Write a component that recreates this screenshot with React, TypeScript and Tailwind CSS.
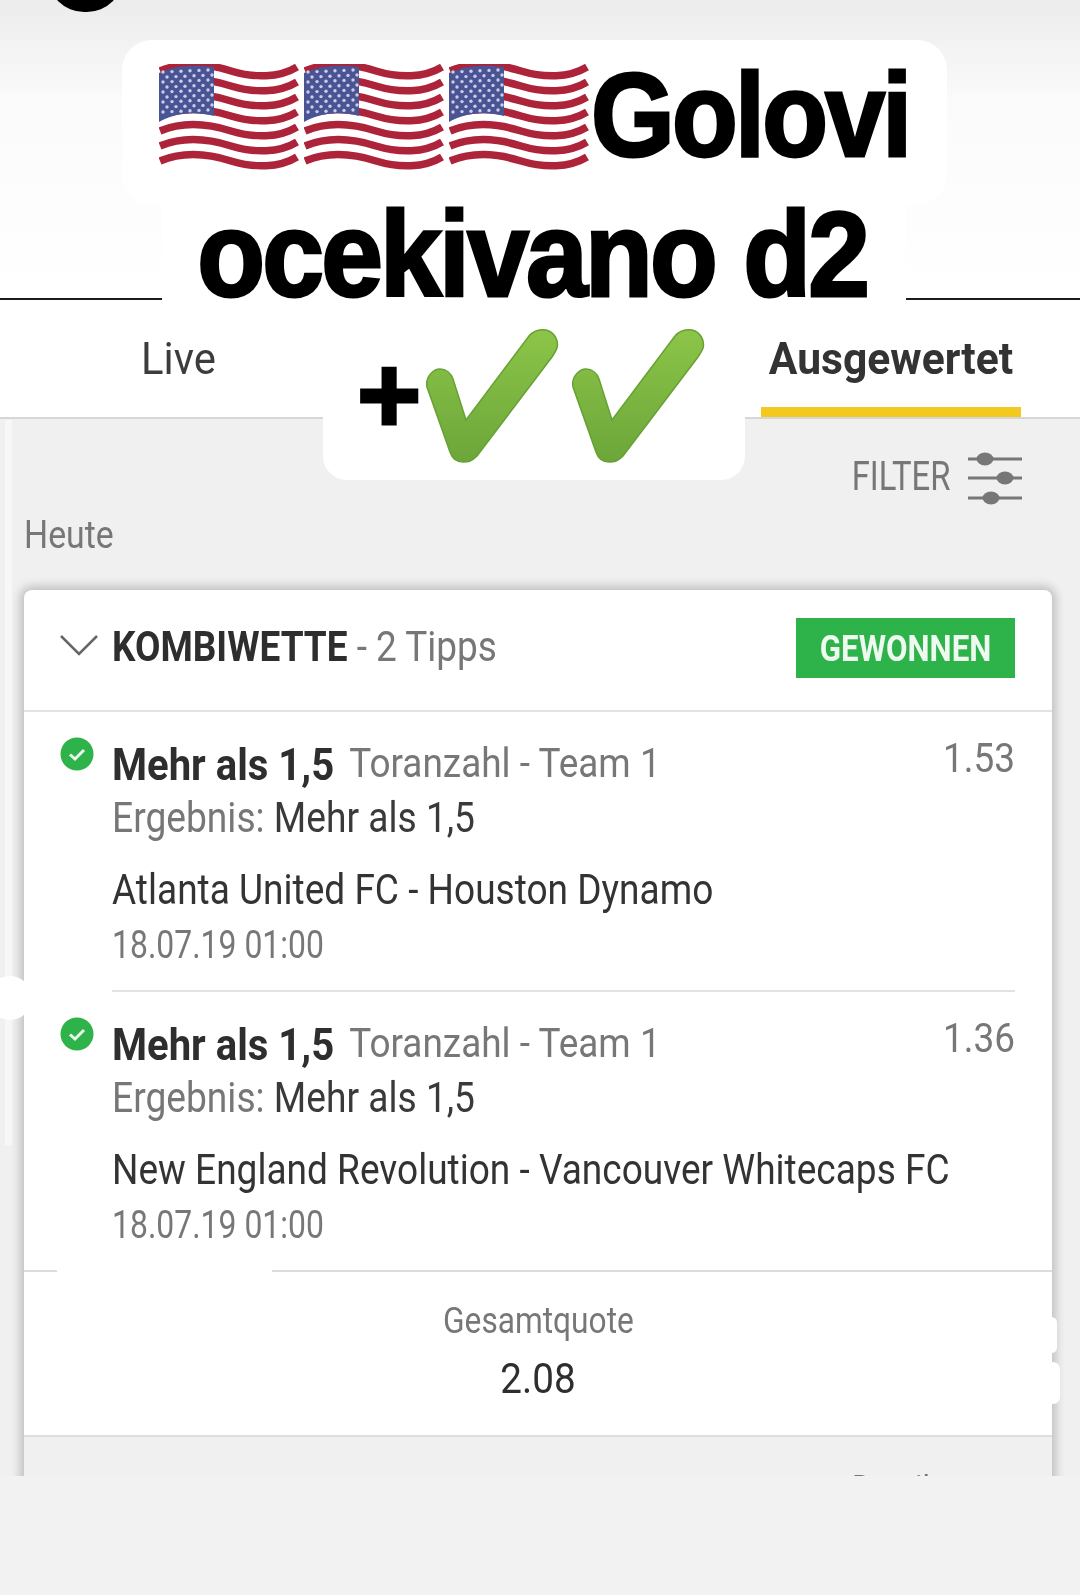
import React from 'react';

const stripes = [0, 1, 2, 3, 4, 5, 6];

const Flag: React.FC = () => (
  <svg width="140" height="106" viewBox="0 0 140 106" className="shrink-0 blur-[0.5px]">
    {stripes.map((i) => (
      <path
        key={i}
        d={`M1 ${7 + i * 15} C 25 ${-3 + i * 15}, 50 ${i * 15}, 72 ${7 + i * 15} C 95 ${14 + i * 15}, 120 ${14 + i * 15}, 138 ${3 + i * 15}`}
        fill="none"
        stroke="#ad2339"
        strokeWidth="7.5"
      />
    ))}
    <path d="M0 9 C 14 2 34 0 55 3 L55 52 C 36 47 15 49 0 58 Z" fill="#4a5494" />
    {[0, 1, 2, 3, 4, 5, 6, 7, 8].map((r) =>
      [0, 1, 2, 3, 4, 5].map((c) => (
        <circle key={`${r}-${c}`} cx={4 + c * 9 + (r % 2) * 4} cy={8 + r * 5 - c * 0.4} r="1.7" fill="#c9cde6" />
      )),
    )}
  </svg>
);

const BigCheck: React.FC<{ id: string }> = ({ id }) => (
  <svg width="134" height="135" viewBox="-1 -1 134 135" className="shrink-0">
    <defs>
      <linearGradient id={id} x1="0" y1="0" x2="0" y2="1">
        <stop offset="0" stopColor="#8cc548" />
        <stop offset="1" stopColor="#6ca63a" />
      </linearGradient>
    </defs>
    <path
      d="M1 58 C -1 47 8 40 14 40 C 20 40 25 44 27 50 L 40 91 L 103 7 C 108 1 114 0 120 1 C 128 3 133 11 131 19 C 130 22 128 25 126 28 L 51 127 C 45 133 42 133 37 133 C 30 133 26 129 24 123 Z"
      fill={`url(#${id})`}
      stroke="#67a033"
      strokeWidth="1.5"
    />
  </svg>
);

const GreenTick: React.FC = () => (
  <svg width="34" height="34" viewBox="0 0 34 34" className="shrink-0">
    <circle cx="17" cy="17" r="16.5" fill="#2eb24a" />
    <path d="M10 17.5 L15 22 L24 13" fill="none" stroke="#e9f7ec" strokeWidth="3" />
  </svg>
);

const Sliders: React.FC = () => (
  <svg width="54" height="56" viewBox="0 0 54 56" className="shrink-0 mt-[6px]">
    <g stroke="#777777" strokeWidth="3">
      <path d="M0 7 H54" />
      <path d="M0 26 H54" />
      <path d="M0 46 H54" />
    </g>
    <g fill="#777777">
      <ellipse cx="17" cy="7" rx="8.5" ry="6.5" />
      <ellipse cx="37" cy="26" rx="8.5" ry="6.5" />
      <ellipse cx="23" cy="46" rx="8.5" ry="6.5" />
    </g>
  </svg>
);

const Tip: React.FC<{ odds: string; match: string }> = ({ odds, match }) => (
  <div className="flex pl-[36px] pr-[37px]">
    <div className="w-[52px] shrink-0 pt-[25px]">
      <GreenTick />
    </div>
    <div className="flex-1 min-w-0">
      <div className="flex justify-between h-[55px] pt-[30px] box-content">
        <div className="origin-left scale-x-[0.89] whitespace-nowrap text-[45px] leading-none text-[#777777]">
          <span className="font-bold text-[#2e2e2e]">Mehr als 1,5</span>
          <span className="ml-[17px] relative top-[-3px] text-[41.5px]">Toranzahl - Team 1</span>
        </div>
        <div className="origin-right scale-x-[0.9] text-[41px] leading-none text-[#777777] mt-[-4px]">{odds}</div>
      </div>
      <div className="h-[72px] origin-left scale-x-[0.885] whitespace-nowrap text-[42px] leading-none text-[#777777]">
        Ergebnis: <span className="text-[#3a3a3a]">Mehr als 1,5</span>
      </div>
      <div className="h-[57px] origin-left scale-x-[0.882] whitespace-nowrap text-[42px] leading-none text-[#333333]">{match}</div>
      <div className="h-[64px] origin-left scale-x-[0.84] whitespace-nowrap text-[38px] leading-none text-[#777777]">18.07.19 01:00</div>
    </div>
  </div>
);

export default function App() {
  return (
    <div className="relative w-[1080px] h-[1595px] overflow-hidden flex flex-col bg-[#f2f2f2] font-['Roboto',sans-serif]">
      {/* app bar behind the sticker */}
      <div className="h-[300px] shrink-0 border-b-2 border-[#1c1c1c] bg-gradient-to-b from-[#ececec] via-[#fbfbfb] via-35% to-white" />

      {/* tabs */}
      <div className="h-[119px] shrink-0 flex justify-between bg-white border-b-2 border-[#d6d6d6] pl-[141px] pr-[59px]">
        <div className="pt-[36px] origin-left scale-x-[0.93] text-[45px] leading-none text-[#3c3c3c]">Live</div>
        <div className="w-[260px] h-[117px] flex flex-col items-center border-b-[10px] border-[#f4c91f]">
          <div className="pt-[36px] scale-x-[0.947] whitespace-nowrap text-[45px] leading-none font-bold text-[#333333]">Ausgewertet</div>
        </div>
      </div>

      {/* bets list */}
      <div className="h-[1057px] shrink-0 bg-[#f0f0f0] pl-[24px] pr-[28px] overflow-hidden">
        <div className="flex justify-end items-center gap-[18px] h-[97px] pt-[18px] pr-[30px]">
          <span className="origin-right scale-x-[0.82] text-[40px] leading-none text-[#777777]">FILTER</span>
          <Sliders />
        </div>
        <div className="h-[74px] origin-left scale-x-[0.89] text-[38px] leading-none text-[#777777]">Heute</div>

        <div className="rounded-t-[8px] bg-white shadow-[0_0_10px_4px_rgba(0,0,0,0.2)]">
          <div className="h-[122px] flex items-start justify-between border-b-2 border-[#e2e2e2] pl-[36px] pr-[37px] pt-[28px]">
            <div className="flex">
              <svg width="38" height="22" viewBox="0 0 38 22" className="shrink-0 mt-[16px]">
                <path d="M1 2 L19 20 L37 2" fill="none" stroke="#666666" strokeWidth="2.5" />
              </svg>
              <div className="ml-[14px] mt-[8px] origin-left scale-x-[0.88] whitespace-nowrap text-[42px] leading-none text-[#777777]">
                <span className="font-bold text-[#2e2e2e]">KOMBIWETTE</span> - 2 Tipps
              </div>
            </div>
            <div className="w-[219px] h-[60px] flex items-center justify-center bg-[#2eb24a]">
              <span className="scale-x-[0.845] whitespace-nowrap text-[37px] leading-none font-bold text-[#eef9f0]">GEWONNEN</span>
            </div>
          </div>

          <Tip odds="1.53" match="Atlanta United FC - Houston Dynamo" />
          <div className="ml-[88px] mr-[37px] h-[2px] bg-[#e2e2e2]" />
          <Tip odds="1.36" match="New England Revolution - Vancouver Whitecaps FC" />

          <div className="flex h-[2px] bg-[#dcdcdc]">
            <div className="ml-[33px] w-[215px] bg-white" />
          </div>
          <div className="h-[163px] flex flex-col items-center pt-[31px]">
            <div className="h-[55px] scale-x-[0.88] text-[36px] leading-none text-[#777777]">Gesamtquote</div>
            <div className="scale-x-[0.92] text-[42px] leading-none text-[#2e2e2e]">2.08</div>
          </div>
          <div className="h-[50px] bg-[#f0f0f0] border-t-2 border-[#dedede] pt-[33px] pl-[828px]">
            <span className="block origin-left scale-x-[0.9] text-[34px] leading-none text-[#777777]">Details</span>
          </div>
        </div>
      </div>

      {/* page overlays */}
      <div className="absolute left-[48px] top-[-60px] w-[75px] h-[72px] rounded-full bg-black" />
      <div className="absolute left-[5px] top-[420px] w-[7px] h-[725px] bg-[#f7f7f7]" />
      <div className="absolute left-[-12px] top-[976px] w-[44px] h-[44px] rounded-full bg-white" />
      <div className="absolute left-[1046px] top-[1317px] w-[11px] h-[36px] rounded-full bg-white" />
      <div className="absolute left-[1046px] top-[1362px] w-[14px] h-[42px] rounded-full bg-white" />

      {/* sticker over the screenshot */}
      <div className="absolute left-[-6px] top-[40px] w-[1080px] flex flex-col items-center">
        <div className="w-[825px] h-[165px] rounded-[30px] bg-white flex items-start pl-[37px] pt-[24px] gap-[5px]">
          <Flag />
          <Flag />
          <Flag />
          <span className="ml-[-3px] mt-[1px] origin-left scale-x-[0.912] whitespace-nowrap font-['Liberation_Sans',sans-serif] text-[118px] leading-[100px] font-bold tracking-[-3px] text-black [-webkit-text-stroke:3px_black]">
            Golovi
          </span>
        </div>
        <div className="w-[744px] h-[115px] bg-white flex justify-center">
          <span className="mr-[4px] scale-x-[0.925] whitespace-nowrap font-['Liberation_Sans',sans-serif] text-[120px] leading-[98px] font-bold tracking-[-3px] text-black [-webkit-text-stroke:3px_black]">
            ocekivano d2
          </span>
        </div>
        <div className="w-[422px] h-[160px] rounded-b-[24px] bg-white flex items-start pl-[34px] pt-[8px]">
          <span className="w-[68px] mt-[17px] font-['Liberation_Sans',sans-serif] text-[110px] leading-[100px] font-bold text-black [-webkit-text-stroke:3px_black]">+</span>
          <BigCheck id="tick-a" />
          <span className="w-[12px]" />
          <BigCheck id="tick-b" />
        </div>
      </div>
    </div>
  );
}
